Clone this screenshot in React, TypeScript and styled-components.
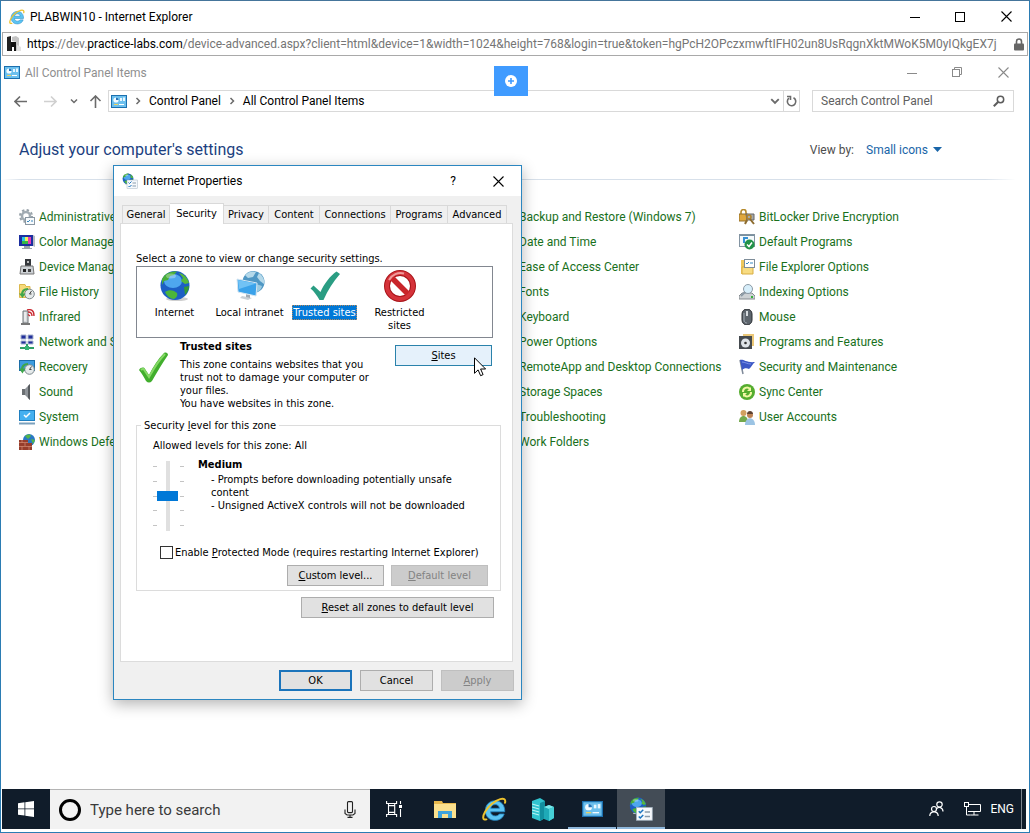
import React from "react";
import styled, { createGlobalStyle, css } from "styled-components";

const UI = `Roboto, "Noto Sans", sans-serif`;
const DLG = `"DejaVu Sans Condensed", "DejaVu Sans", sans-serif`;

const Global = createGlobalStyle`
  *, *::before, *::after { box-sizing: border-box; }
  body { margin: 0; background: #fff; font-family: ${UI}; font-size: 12px; line-height: 16px; color: #000; }
  button, input, select { font: inherit; color: inherit; margin: 0; padding: 0; border: 0; background: none; border-radius: 0; }
  svg { display: block; flex: none; }
  p, h1, h2, ul { margin: 0; padding: 0; }
`;

/* ---------- browser frame ---------- */

const BrowserWindow = styled.div`
  display: flex;
  flex-direction: column;
  min-height: 100vh;
  border: 1px solid #2b7cb3;
  border-top-color: #45759b;
  background: #fff;
`;

const TitleBar = styled.header`
  display: flex;
  align-items: center;
  height: 31px;
  padding-left: 8px;
  > svg { margin-right: 5px; }
`;

const TitleText = styled.h1`
  flex: 1;
  font-size: 12px;
  font-weight: 400;
  white-space: nowrap;
`;

const WindowButton = styled.button<{ $w?: number }>`
  display: flex;
  align-items: center;
  justify-content: center;
  width: ${(p) => p.$w ?? 46}px;
  height: 28px;
`;

const AddressBar = styled.div`
  display: flex;
  align-items: center;
  height: 24px;
  margin: 0 1px;
  padding: 0 3px 0 4px;
  gap: 5px;
  border: 1px solid #a9a9a9;
  font-size: 12px;
`;

const Url = styled.div`
  flex: 1;
  min-width: 0;
  overflow: hidden;
  white-space: nowrap;
  color: #757575;
  b { font-weight: 400; color: #000; }
`;

/* ---------- remote desktop ---------- */

const Desktop = styled.main`
  position: relative;
  flex: 1;
  display: flex;
  flex-direction: column;
  margin: 0 3px 3px 1px;
`;

const PanelTitle = styled.div`
  display: flex;
  align-items: center;
  height: 33px;
  padding-left: 2px;
  color: #8f8f8f;
  > svg { margin-right: 5px; }
  span { flex: 1; }
`;

const NavRow = styled.div`
  display: flex;
  align-items: center;
  margin-top: 1px;
  padding: 0 12px 0 12px;
`;

const NavButtons = styled.div`
  display: grid;
  grid-template-columns: 30px 26px 19px 19px;
  align-items: center;
`;

const NavButton = styled.button`
  display: flex;
  height: 22px;
  align-items: center;
`;

const PathBox = styled.nav`
  display: flex;
  align-items: center;
  flex: 1;
  height: 22px;
  border: 1px solid #d9d9d9;
  padding-left: 2px;
`;

const PathSpace = styled.div`
  flex: 1;
`;

const Crumb = styled.a`
  color: #000;
  text-decoration: none;
  white-space: nowrap;
`;

const CrumbArrow = styled.span`
  display: flex;
  justify-content: center;
  width: 22px;
`;

const PathButton = styled.button<{ $line?: boolean }>`
  display: flex;
  align-items: center;
  justify-content: center;
  width: 16px;
  height: 20px;
  ${(p) => p.$line && css`border-left: 1px solid #d9d9d9;`}
`;

const SearchBox = styled.label`
  display: flex;
  align-items: center;
  width: 202px;
  height: 22px;
  margin-left: 12px;
  padding: 0 8px;
  border: 1px solid #d9d9d9;
  input { flex: 1; min-width: 0; outline: 0; }
  input::placeholder { color: #606060; opacity: 1; }
`;

const Heading = styled.div`
  display: flex;
  align-items: center;
  justify-content: space-between;
  height: 67px;
  padding: 8px 84px 0 17px;
  h2 { font-size: 16px; line-height: 20px; font-weight: 400; color: #1c3f80; }
`;

const ViewBy = styled.div`
  display: flex;
  align-items: center;
  gap: 12px;
  color: #4d4d4d;
`;

const ViewSelect = styled.span`
  display: flex;
  align-items: center;
  gap: 5px;
  select { appearance: none; color: #1965a8; outline: 0; }
`;

const Divider = styled.div`
  height: 1px;
  background: linear-gradient(90deg, #fff, #d7e0ea 20px, #d7e0ea 96%, #fff 99%);
`;

const Items = styled.div`
  display: grid;
  grid-template-columns: repeat(4, 240px);
  padding: 24px 0 0 17px;
  flex: 1;
  align-items: start;
  overflow: hidden;
`;

const ItemColumn = styled.ul<{ $col: number }>`
  grid-column: ${(p) => p.$col};
  grid-row: 1;
  list-style: none;
`;

const Item = styled.li<{ $bare?: boolean }>`
  height: 25px;
  padding-left: ${(p) => (p.$bare ? 20 : 0)}px;
`;

const ItemLink = styled.a`
  display: flex;
  align-items: center;
  height: 25px;
  gap: 4px;
  color: #19701c;
  text-decoration: none;
  white-space: nowrap;
`;

const ConnectBadge = styled.button`
  position: absolute;
  left: 492px;
  top: 10px;
  display: flex;
  align-items: center;
  justify-content: center;
  width: 34px;
  height: 30px;
  background: #409bff;
`;

/* ---------- dialog ---------- */

const Dialog = styled.section`
  position: absolute;
  left: 111px;
  top: 109px;
  width: 409px;
  border: 1px solid #2b86c0;
  background: #f0f0f0;
  box-shadow: 0 4px 14px rgba(0, 0, 0, 0.3);
  font-family: ${DLG};
  font-size: 11px;
  line-height: 13px;
`;

const DialogTitle = styled.header`
  display: flex;
  align-items: center;
  height: 30px;
  padding-left: 8px;
  background: #fff;
  font-family: ${UI};
  font-size: 12px;
  > svg { margin-right: 5px; }
  span { flex: 1; }
`;

const Tabs = styled.div`
  display: flex;
  align-items: flex-end;
  height: 27px;
  padding-left: 8px;
`;

const Tab = styled.button<{ $w: number; $active?: boolean }>`
  width: ${(p) => p.$w}px;
  height: 18px;
  border: 1px solid #d9d9d9;
  border-width: 1px 1px 0 0;
  text-align: center;
  white-space: nowrap;
  &:first-child { border-left-width: 1px; }
  ${(p) =>
    p.$active &&
    css`
      height: 21px;
      padding-bottom: 2px;
      margin-bottom: -1px;
      background: #fff;
      z-index: 1;
    `}
`;

const Page = styled.div`
  height: 439px;
  margin: 0 8px 0 6px;
  padding: 28px 11px 0 15px;
  border: 1px solid #dcdcdc;
  background: #fff;
`;

const ZoneList = styled.div`
  display: flex;
  width: 357px;
  height: 72px;
  margin-top: 1px;
  padding-top: 3px;
  border: 1px solid #828790;
`;

const Zone = styled.button`
  display: flex;
  flex-direction: column;
  align-items: center;
  width: 75px;
  gap: 3px;
  line-height: 13px;
  white-space: nowrap;
`;

const ZoneLabel = styled.span<{ $on?: boolean }>`
  padding: 1px;
  ${(p) =>
    p.$on &&
    css`
      background: #0078d7;
      color: #fff;
      outline: 1px dotted #b98a5a;
      outline-offset: -1px;
    `}
`;

const ZoneInfo = styled.div`
  display: flex;
  height: 81px;
  padding-top: 2px;
`;

const ZoneMark = styled.div`
  width: 44px;
  padding: 12px 0 0 2px;
`;

const ZoneText = styled.div`
  width: 215px;
  white-space: nowrap;
  strong { display: block; margin-bottom: 5px; }
`;

const Button = styled.button<{ $w: number; $kind?: "hot" | "default" }>`
  width: ${(p) => p.$w}px;
  height: 21px;
  border: 1px solid #adadad;
  background: #e1e1e1;
  text-align: center;
  white-space: nowrap;
  &:disabled { background: #cccccc; border-color: #bfbfbf; color: #838383; }
  ${(p) => p.$kind === "hot" && css`background: #e5f1fb; border-color: #2a82ab;`}
  ${(p) => p.$kind === "default" && css`border: 2px solid #1b74bb;`}
`;

const Group = styled.fieldset`
  width: 365px;
  height: 172px;
  margin: 0;
  padding: 7px 12px 5px 16px;
  border: 1px solid #dcdcdc;
  legend { padding: 0 3px; margin-left: -12px; line-height: 13px; }
`;

const LevelRow = styled.div`
  display: flex;
  height: 94px;
  padding-top: 6px;
`;

const Ticks = styled.div`
  display: flex;
  flex-direction: column;
  justify-content: space-between;
  height: 60px;
  margin-top: 8px;
  i { display: block; width: 4px; height: 1px; background: #c4c4c4; }
`;

const LevelSlider = styled.input`
  appearance: none;
  writing-mode: vertical-lr;
  direction: rtl;
  width: 21px;
  height: 70px;
  margin: 3px 2px 0 0;
  outline: 0;
  background: linear-gradient(#e0e0e0, #e0e0e0) center / 4px 100% no-repeat;
  &::-webkit-slider-thumb {
    appearance: none;
    width: 21px;
    height: 10px;
    background: #0078d7;
  }
`;

const LevelText = styled.div`
  margin-left: 14px;
  strong { display: block; margin-bottom: 2px; }
  p { padding-left: 13px; white-space: nowrap; }
`;

const CheckRow = styled.label`
  display: flex;
  align-items: center;
  gap: 2px;
  margin: 0 0 6px 7px;
  white-space: nowrap;
  input { appearance: none; width: 13px; height: 13px; border: 1px solid #333; background: #fff; }
`;

const ButtonRow = styled.div<{ $gap: number; $pad: string }>`
  display: flex;
  justify-content: flex-end;
  gap: ${(p) => p.$gap}px;
  padding: ${(p) => p.$pad};
`;

const Pointer = styled.div`
  position: absolute;
  left: 472px;
  top: 301px;
`;

/* ---------- taskbar ---------- */

const Taskbar = styled.footer`
  display: flex;
  height: 40px;
  background: #101c2a;
  color: #fff;
`;

const TaskButton = styled.button<{ $w?: number; $line?: boolean; $active?: boolean }>`
  display: flex;
  align-items: center;
  justify-content: center;
  width: ${(p) => p.$w ?? 48}px;
  height: 40px;
  ${(p) => p.$active && css`background: #434c56;`}
  ${(p) => (p.$line || p.$active) && css`box-shadow: inset 0 -2px #8fb8dc;`}
`;

const TaskItems = styled.div`
  display: flex;
  flex: 1;
  gap: 1px;
`;

const TaskSearch = styled.label`
  display: flex;
  align-items: center;
  width: 320px;
  padding: 0 14px 0 8px;
  gap: 8px;
  border-top: 1px solid #b4b4b4;
  background: #f2f2f2;
  input { flex: 1; min-width: 0; outline: 0; font-size: 15px; line-height: 20px; }
  input::placeholder { color: #3a3a3a; opacity: 1; }
`;

const Tray = styled.div`
  display: flex;
  align-items: center;
  gap: 20px;
`;

const Lang = styled.button`
  margin-left: -11px;
`;

const ShowDesktop = styled.button`
  width: 5px;
  height: 40px;
  margin-left: -13px;
  border-left: 1px solid #7d858e;
`;

/* ---------- icons ---------- */

type IconProps = { size?: number };

const IeIcon = ({ size = 16 }: IconProps) => (
  <svg width={size} height={size} viewBox="0 0 24 24" fill="none">
    <path d="M21.800 14.200H8.200c.2 2.500 2 4 4.600 4 1.900 0 3.100-.7 3.900-1.900h4.600c-1.200 3.800-4.500 6.100-8.600 6.100C7.200 22.400 3.200 18.800 3.200 13.200s4-9.600 9.400-9.600c5.700 0 9.500 4.200 9.200 10.600zM8.400 10.900h8.300c-.2-2.200-1.700-3.600-4-3.600-2.400 0-3.900 1.300-4.300 3.600z" fill="#5cc4f2" stroke="#2488c5" strokeWidth=".8" />
    <path d="M4.200 21.500C.4 22.600.4 18.800 3 14.200 6.300 8.200 12.500 3.400 17.500 2c3.700-1 5.500.4 4.600 3.600" stroke="#edc22e" strokeWidth="1.900" strokeLinecap="round" />
  </svg>
);

const SiteIcon = () => (
  <svg width="15" height="16" viewBox="0 0 15 16">
    <path d="M0 1l4-1v15H0z" fill="#222" /><path d="M4 6h5v9H7v-4H5v4H4z" fill="#111" />
    <path d="M5 1l4-1 3 2v12l-3 1V6L5 5z" fill="#c4c4c4" /><path d="M10 9l4 2v4h-4z" fill="#e2e2e2" />
  </svg>
);

const LockIcon = () => (
  <svg width="10" height="13" viewBox="0 0 10 13">
    <path d="M2.500 6V3.500a2.500 2.500 0 015 0V6" fill="none" stroke="#666" strokeWidth="1.600" />
    <rect y="5.500" width="10" height="7" rx="1" fill="#666" />
  </svg>
);

const Minimize = ({ c = "#000" }) => (
  <svg width="10" height="10"><path d="M0 5.500h10" stroke={c} /></svg>
);
const Maximize = () => (
  <svg width="10" height="10"><rect x=".5" y=".5" width="9" height="9" fill="none" stroke="#000" /></svg>
);
const Restore = () => (
  <svg width="11" height="11" fill="none" stroke="#8a8a8a"><rect x=".5" y="2.500" width="7" height="7" /><path d="M2.500 2.500v-2h7v7h-2" /></svg>
);
const Close = ({ c = "#000" }) => (
  <svg width="11" height="11"><path d="M.5 .5l10 10M10.500 .5l-10 10" stroke={c} strokeWidth="1.100" /></svg>
);

const PanelIcon = ({ w = 16, h = 13 }: { w?: number; h?: number }) => (
  <svg width={w} height={h} viewBox="0 0 16 13" preserveAspectRatio="none">
    <rect x=".5" y=".5" width="15" height="12" fill="#6cc0ee" stroke="#1b6fae" />
    <circle cx="5" cy="5" r="2.600" fill="#f4fbff" /><path d="M5 5V2.400A2.600 2.600 0 017.600 5z" fill="#2372b8" />
    <rect x="9" y="3" width="2" height="3" fill="#e9f7ff" /><rect x="12" y="2.500" width="2" height="3.500" fill="#e9f7ff" />
    <path d="M3 9.500h4" stroke="#f3d35c" /><path d="M8 9.500h5" stroke="#fff" />
  </svg>
);

const Arrow = ({ c, r = 0 }: { c: string; r?: number }) => (
  <svg width="13" height="13" viewBox="0 0 13 13" fill="none" stroke={c} strokeWidth="1.600">
    <path d="M13 6.500H1.500M6 1.500l-5 5 5 5" transform={`rotate(${r} 6.500 6.500)`} />
  </svg>
);
const Chevron = ({ r = 0, c = "#6b6b6b", s = 8 }: { r?: number; c?: string; s?: number }) => (
  <svg width={s} height={s} viewBox="0 0 8 8" fill="none" stroke={c} strokeWidth="1.500">
    <path d="M1 2.500l3 3 3-3" transform={`rotate(${r} 4 4)`} />
  </svg>
);
const Refresh = () => (
  <svg width="11" height="12" viewBox="0 0 11 12" fill="none" stroke="#6b6b6b" strokeWidth="1.600">
    <path d="M7.500 2.800A4.200 4.200 0 113 3.200" /><path d="M1 1.500h3.500V5" />
  </svg>
);
const Magnifier = () => (
  <svg width="12" height="12" viewBox="0 0 12 12" fill="none" stroke="#5c5c5c">
    <circle cx="7.500" cy="4.500" r="3.200" strokeWidth="1.500" /><path d="M5 7l-4.200 4.200" strokeWidth="2" />
  </svg>
);

const GlobeArt = () => (
  <>
    <ellipse cx="18" cy="29" rx="11" ry="2" fill="#cfcfcf" />
    <circle cx="16" cy="15.500" r="14.500" fill="#1d5fc4" />
    <ellipse cx="14" cy="11" rx="9" ry="7" fill="#4ea6ee" />
    <path d="M3 9C6 3 12 1 18 1.500L15 5l-4 1-2 4-4 1-2 4z" fill="#48ad39" />
    <path d="M20 3c5 1 9 5 10 10l-4 1-4-3 2-3z" fill="#55b83c" />
    <path d="M6 22c4-3 9-2 12 1 1 3-1 5-3 6-4 0-7-3-9-7z" fill="#4cb53a" />
    <path d="M25 17l5-1c0 4-2 7-4 9z" fill="#349a35" />
    <ellipse cx="12" cy="6" rx="5" ry="2.500" fill="#fff" opacity=".3" />
  </>
);
const Globe = () => <svg width="32" height="32" viewBox="0 0 32 32"><GlobeArt /></svg>;

const NetSettings = ({ size = 16 }: IconProps) => (
  <svg width={size} height={size} viewBox="0 0 32 32">
    <g transform="scale(.75)"><GlobeArt /></g>
    <rect x="10" y="14" width="21" height="17" fill="#f6f9fc" stroke="#a5b4c2" />
    <path d="M13 19l2 2 4-4M13 26l2 2 4-4" stroke="#1c74c0" strokeWidth="2" fill="none" /><path d="M21 20h7M21 26h7" stroke="#8b9cab" strokeWidth="2" />
  </svg>
);

const Intranet = () => (
  <svg width="32" height="32" viewBox="0 0 32 32">
    <circle cx="19.500" cy="12" r="11" fill="#4f97c4" />
    <path d="M11 5c4-4 9-4 11-3l-3 5-5 1zM25 3c4 3 6 7 5 11l-4-3-3-4z" fill="#b5d9ea" />
    <path d="M22 14l6 2c-1 4-4 6-6 6z" fill="#9acbe2" />
    <path d="M8 26l10 2-4 2-8-2z" fill="#c9d0d6" /><path d="M12 24l4 1v3l-4-1z" fill="#a0aab3" />
    <path d="M3 9l20 4-1 13L4 22z" fill="#3aa2ea" stroke="#d6e6f2" strokeWidth="1" /><path d="M4 10l18 3.500L5 19z" fill="#71c2f5" />
  </svg>
);
const TealCheck = () => (
  <svg width="32" height="32" viewBox="0 0 32 32"><path d="M1.500 18.500l3-3 7 6.500C15 14 21 6 27.500 1.500L31 4C24 12 19 20 14.500 30h-4C8 26 5 21 1.500 18.500z" fill="#2a9d83" /></svg>
);
const GreenCheck = () => (
  <svg width="32" height="32" viewBox="0 0 32 32">
    <path d="M1 18c2-3 5-3 6-1l4 6C15 15 20 7 26 1c2-1 4 0 4 2C24 12 19 20 14 29c-2 2-4 2-6 0-2-4-4-7-7-11z" fill="#41ae2d" />
    <path d="M3 18c2-2 3-1 4 1l4 6C16 16 20 9 27 2" fill="none" stroke="#85d965" strokeWidth="2" />
  </svg>
);
const Restricted = () => (
  <svg width="32" height="32" viewBox="0 0 32 32">
    <circle cx="16" cy="16" r="13" fill="#fff" stroke="#a91419" strokeWidth="6" />
    <path d="M7 7l18 18" stroke="#c9252a" strokeWidth="5.500" />
    <circle cx="16" cy="16" r="13" fill="none" stroke="#d5333a" strokeWidth="4" />
    <path d="M5 10A13 13 0 0120 3.500" fill="none" stroke="#f09a9a" strokeWidth="2" />
  </svg>
);

const Small = ({ children }: { children: React.ReactNode }) => (
  <svg width="16" height="16" viewBox="0 0 16 16" fill="none">{children}</svg>
);

const icons: Record<string, React.ReactNode> = {
  admin: <Small><circle cx="7" cy="7" r="4" stroke="#a2acb3" strokeWidth="2.500" /><circle cx="7" cy="7" r="6" stroke="#98a2a9" strokeWidth="2" strokeDasharray="2.400 2.300" /><rect x="6.500" y="8.500" width="9" height="7" fill="#f7fafc" stroke="#8b98a3" /><path d="M8 12l1 1 2-2M12 12h2" stroke="#3a87bd" /></Small>,
  color: <Small><path d="M0 1h14l1 11H0z" fill="#1c2fa0" /><path d="M3 3h3v7H3z" fill="#28c6e8" /><path d="M6 3h3v7H6z" fill="#f5f15a" /><path d="M9 3h3v7H9z" fill="#e33db7" /><path d="M3 7h6v3H3z" fill="#35b845" /><path d="M14 1l2 1v11l-2-1z" fill="#b6bbc3" /><path d="M5 12h6v2h2v1H3v-1h2z" fill="#9ba1aa" /></Small>,
  device: <Small><rect x="6" y="0" width="6" height="7" fill="#34373b" /><rect x="8" y="2" width="2" height="2" fill="#bbb" /><path d="M2 7h12l1 8H1z" fill="#cdd1d5" stroke="#777" /><rect x="4" y="10" width="3" height="3" fill="#222" /><rect x="9" y="10" width="3" height="3" fill="#444" /></Small>,
  history: <Small><path d="M.5 .5H6l1 2h4v11H.5z" fill="#f6da7a" stroke="#dcb84c" /><circle cx="10.500" cy="10" r="4.800" fill="#e4e9ea" stroke="#7d898e" /><path d="M10.500 10l2-3M10.500 10h2" stroke="#444" /><path d="M9 5C5 5 3 7.500 3 11" stroke="#3fa64a" strokeWidth="2.200" /><path d="M0 9.500h6.500L3.500 14z" fill="#3fa64a" /></Small>,
  infrared: <Small><path d="M4 2h5v12H4z" fill="#d5d8da" stroke="#6e7478" /><path d="M6 3v9" stroke="#fff" /><path d="M2 15h9" stroke="#777" strokeWidth="2" /><path d="M8 1c4-1 7 0 7 6M9 3c3 0 4 1 4 4M9 5.500l2 1.500" stroke="#c92b33" strokeWidth="1.400" /></Small>,
  network: <Small><path d="M2 1h5v4H2zM9 1h5v4H9zM2 7h5v3H2zM9 7h5v3H9z" fill="#22309b" stroke="#a9b4cf" /><path d="M8 10v4M1 14h14" stroke="#2f9f65" strokeWidth="2" /><rect x="6" y="12" width="4" height="4" fill="#38b377" /></Small>,
  recovery: <Small><rect x=".5" y="1.500" width="15" height="10" fill="#3c9cdf" stroke="#1b6ca8" /><circle cx="10.500" cy="10.500" r="4.800" fill="#e4e9ea" stroke="#7d898e" /><path d="M10.500 10.500l2-3M10.500 10.500h2" stroke="#444" /><path d="M9 5C5 5 3 7.500 3 11" stroke="#3fa64a" strokeWidth="2.200" /><path d="M0 9.500h6.500L3.500 14.500z" fill="#3fa64a" /></Small>,
  sound: <Small><path d="M3 5h3v6H3z" fill="#6b6f73" /><path d="M6 5l5-5v16l-5-5z" fill="#8f9499" /><path d="M9 2l2-2v16l-2-2z" fill="#565a5e" /></Small>,
  system: <Small><rect x=".5" y="1.500" width="15" height="10" fill="#45b0f0" stroke="#1f7fc0" /><path d="M5 6l2 2 4-4" stroke="#fff" strokeWidth="1.500" /><path d="M0 14.500h16" stroke="#7aa0bd" strokeWidth="2" /></Small>,
  firewall: <Small><circle cx="10" cy="6" r="6" fill="#2978c4" /><path d="M6 2c3-2 5-2 6 0l-3 3zM12 5l4 1-2 4z" fill="#53b648" /><path d="M0 6h9v3h4v7H0z" fill="#963d2c" /><path d="M0 8.500h9M0 12.500h13M3 6v3M6 9v3M3 12v4M10 12v4" stroke="#d58d76" strokeWidth=".7" /></Small>,
  bitlocker: <Small><path d="M2 5V3a2.500 2.500 0 015 0v3" stroke="#b58a2c" strokeWidth="1.600" /><rect x="0" y="5" width="8" height="7" fill="#dfa73d" stroke="#94702a" /><path d="M7 5h8v6H8z" fill="#a5a9ac" stroke="#666" /><circle cx="10" cy="8" r="2" stroke="#b0822a" strokeWidth="1.500" /><path d="M11 10l4 5M8 11l-2 4" stroke="#8d6c2f" strokeWidth="2" /></Small>,
  defaults: <Small><rect x=".5" y=".5" width="15" height="12" fill="#f6fafc" stroke="#8394a2" /><path d="M1 1.500h14" stroke="#78909f" /><path d="M5 9V4h4" stroke="#3691d5" strokeWidth="2" /><circle cx="10.500" cy="10.500" r="5" fill="#229248" /><path d="M8 10.500l2 2 3-4" stroke="#fff" strokeWidth="1.500" /></Small>,
  explorer: <Small><path d="M2 1h5v14H2z" fill="#eec85e" /><path d="M3 8h11v7H3z" fill="#f8dc82" stroke="#d8ae45" /><rect x="5.500" y=".5" width="10" height="8" fill="#fff" stroke="#7e8d99" /><path d="M7 4l1 1 2-2M11 4h3" stroke="#3989c1" /></Small>,
  indexing: <Small><path d="M3 9h10l3 3v3H0v-3z" fill="#cdd1d4" stroke="#858b90" /><circle cx="9" cy="5" r="4.500" fill="#d7eefa" stroke="#8c9aa5" /><path d="M6 8l-4 4" stroke="#8c9aa5" strokeWidth="2" /><path d="M12 13h2" stroke="#37b13b" strokeWidth="2" /></Small>,
  mouse: <Small><rect x="3" y="0" width="10" height="16" rx="5" fill="#5d656d" stroke="#2a2e33" /><path d="M5 4v7c0 3 3 3 3 3" stroke="#a4acb4" /><rect x="7" y="2" width="2" height="5" fill="#d5dade" /></Small>,
  programs: <Small><path d="M4 0h11v12H4z" fill="#ecc878" /><rect x="0" y="2" width="13" height="13" fill="#454a4f" /><circle cx="6.500" cy="9" r="4.500" fill="#dfe4e8" /><circle cx="6.500" cy="9" r="1.300" fill="#333" /></Small>,
  flag: <Small><path d="M1 1l3 14" stroke="#7f8a9a" strokeWidth="1.500" /><path d="M1 1c4-1 6 3 15 2-3 2-3 5-6 7-2-1-5-1-7 1z" fill="#3c57c5" /><path d="M3 3c3 0 5 2 9 2" stroke="#7c93e8" /></Small>,
  sync: <Small><circle cx="8" cy="8" r="8" fill="#55ad2f" /><path d="M4 8a4 4 0 017-3M12 8a4 4 0 01-7 3" stroke="#f1f8a5" strokeWidth="2" /><path d="M12 3v4H8zM4 13V9h4z" fill="#f1f8a5" /></Small>,
  users: <Small><circle cx="4.500" cy="4" r="3" fill="#d2a05f" /><path d="M0 13c0-8 9-8 9 0z" fill="#74a94c" /><circle cx="11" cy="6" r="3" fill="#bd8355" /><path d="M8 5c0-4 6-4 6 0z" fill="#5d4132" /><path d="M6 16c0-9 10-9 10 0z" fill="#9cc4e4" /></Small>,
};

const StartLogo = () => (
  <svg width="16" height="16" viewBox="0 0 16 16" fill="#fff"><path d="M0 2.200l6.500-.9v6.200H0zM7.300 1.200L16 0v7.500H7.300zM0 8.300h6.500v6.300L0 13.700zM7.300 8.300H16V16l-8.700-1.200z" /></svg>
);
const Mic = () => (
  <svg width="12" height="17" viewBox="0 0 12 17" fill="none" stroke="#222" strokeWidth="1.100"><rect x="3.500" y=".6" width="5" height="11" rx="1" /><path d="M1 8.500v4l2 1.500h6l2-1.500v-4M6 14v2.500M3.500 16.400h5" /></svg>
);
const TaskView = () => (
  <svg width="17" height="16" viewBox="0 0 17 16" fill="none" stroke="#fff" strokeWidth="1.100"><path d="M.6 0v2.500h10V0M.6 16v-2.500h10V16M2.500 2.500v11M8.700 2.500v11M2.500 4.600h6.200M2.500 11.400h6.200M14.500 0v3M14.500 8v8" /><rect x="13" y="4" width="3" height="3" fill="#fff" stroke="none" /></svg>
);
const Folder = () => (
  <svg width="22" height="19" viewBox="0 0 22 19"><path d="M0 1h8l1 2h13v15H0z" fill="#e8b84c" /><path d="M0 4h22v14H0z" fill="#fbe08d" /><path d="M4 18v-7h14v7h-4v-4H8v4z" fill="#3fa3dc" /></svg>
);
const Servers = () => (
  <svg width="22" height="23" viewBox="0 0 22 23"><path d="M0 3l8-3 5 3v17l-5 3-8-3z" fill="#31c4cf" /><path d="M8 5l5-2v17l-5 3z" fill="#128f9f" /><path d="M0 6l7 2M0 9l7 2M0 12l7 2M0 15l7 2" stroke="#b9f4f5" strokeWidth="1.200" /><path d="M12 9l5-2 5 2v11l-5 3-5-2z" fill="#1faab7" /><path d="M12 9l5-2 5 2-5 2z" fill="#7ce8ea" /><path d="M17 11l5-2v11l-5 3z" fill="#46cfd6" /></svg>
);
const People = () => (
  <svg width="15" height="16" viewBox="0 0 15 16" fill="none" stroke="#fff" strokeWidth="1.200"><circle cx="10.500" cy="3.500" r="2.700" /><path d="M7.500 8c2-3 6.500-1.500 6.500 2.500" /><circle cx="5" cy="8" r="2.500" /><path d="M.8 15c0-5.500 8.400-5.500 8.400 0" /></svg>
);
const Ethernet = () => (
  <svg width="17" height="14" viewBox="0 0 17 14" fill="none" stroke="#fff"><path d="M5 2.500h11.500v7H4M10 9.500V13M6.500 13h8M2.500 5v8h4" /><rect x=".5" y=".5" width="4" height="4" /></svg>
);

/* ---------- content ---------- */

const columnOne = [
  ["admin", "Administrative Tools"], ["color", "Color Management"], ["device", "Device Manager"],
  ["history", "File History"], ["infrared", "Infrared"], ["network", "Network and Sharing Center"],
  ["recovery", "Recovery"], ["sound", "Sound"], ["system", "System"], ["firewall", "Windows Defender Firewall"],
];
const columnThree = [
  "Backup and Restore (Windows 7)", "Date and Time", "Ease of Access Center", "Fonts", "Keyboard",
  "Power Options", "RemoteApp and Desktop Connections", "Storage Spaces", "Troubleshooting", "Work Folders",
];
const columnFour = [
  ["bitlocker", "BitLocker Drive Encryption"], ["defaults", "Default Programs"], ["explorer", "File Explorer Options"],
  ["indexing", "Indexing Options"], ["mouse", "Mouse"], ["programs", "Programs and Features"],
  ["flag", "Security and Maintenance"], ["sync", "Sync Center"], ["users", "User Accounts"],
];
const tabs: [string, number][] = [
  ["General", 48], ["Security", 54], ["Privacy", 45], ["Content", 51], ["Connections", 71], ["Programs", 57], ["Advanced", 59],
];

const IconColumn = ({ col, items }: { col: number; items: string[][] }) => (
  <ItemColumn $col={col}>
    {items.map(([icon, name]) => (
      <Item key={name}><ItemLink href="#">{icons[icon]}{name}</ItemLink></Item>
    ))}
  </ItemColumn>
);

const InternetProperties = () => (
  <Dialog role="dialog" aria-label="Internet Properties">
    <DialogTitle>
      <NetSettings />
      <span>Internet Properties</span>
      <WindowButton $w={44} aria-label="Help">?</WindowButton>
      <WindowButton $w={46} aria-label="Close"><Close /></WindowButton>
    </DialogTitle>
    <Tabs role="tablist">
      {tabs.map(([name, w]) => (
        <Tab key={name} role="tab" $w={w} $active={name === "Security"}>{name}</Tab>
      ))}
    </Tabs>
    <Page>
      <p>Select a zone to view or change security settings.</p>
      <ZoneList>
        <Zone><Globe /><ZoneLabel>Internet</ZoneLabel></Zone>
        <Zone><Intranet /><ZoneLabel>Local intranet</ZoneLabel></Zone>
        <Zone><TealCheck /><ZoneLabel $on>Trusted sites</ZoneLabel></Zone>
        <Zone><Restricted /><ZoneLabel>Restricted<br />sites</ZoneLabel></Zone>
      </ZoneList>
      <ZoneInfo>
        <ZoneMark><GreenCheck /></ZoneMark>
        <ZoneText>
          <strong>Trusted sites</strong>
          <p>This zone contains websites that you<br />trust not to damage your computer or<br />your files.<br />You have websites in this zone.</p>
        </ZoneText>
        <ButtonRow $gap={0} $pad="5px 0 0"><Button $w={97} $kind="hot"><u>S</u>ites</Button></ButtonRow>
      </ZoneInfo>
      <Group>
        <legend>Security <u>l</u>evel for this zone</legend>
        <p>Allowed levels for this zone: All</p>
        <LevelRow>
          <Ticks><i /><i /><i /><i /><i /></Ticks>
          <LevelSlider type="range" min={0} max={4} defaultValue={2} aria-label="Security level for this zone" />
          <Ticks><i /><i /><i /><i /><i /></Ticks>
          <LevelText>
            <strong>Medium</strong>
            <p>- Prompts before downloading potentially unsafe<br />content<br />- Unsigned ActiveX controls will not be downloaded</p>
          </LevelText>
        </LevelRow>
        <CheckRow><input type="checkbox" /><span>Enable <u>P</u>rotected Mode (requires restarting Internet Explorer)</span></CheckRow>
        <ButtonRow $gap={7} $pad="0">
          <Button $w={97}><u>C</u>ustom level...</Button>
          <Button $w={97} disabled><u>D</u>efault level</Button>
        </ButtonRow>
      </Group>
      <ButtonRow $gap={0} $pad="6px 7px 0 0"><Button $w={193}><u>R</u>eset all zones to default level</Button></ButtonRow>
    </Page>
    <ButtonRow $gap={8} $pad="8px 7px">
      <Button $w={73} $kind="default">OK</Button>
      <Button $w={73}>Cancel</Button>
      <Button $w={73} disabled><u>A</u>pply</Button>
    </ButtonRow>
  </Dialog>
);

export default function App() {
  return (
    <>
      <Global />
      <BrowserWindow>
        <TitleBar>
          <IeIcon />
          <TitleText>PLABWIN10 - Internet Explorer</TitleText>
          <WindowButton $w={44} aria-label="Minimize"><Minimize /></WindowButton>
          <WindowButton aria-label="Maximize"><Maximize /></WindowButton>
          <WindowButton aria-label="Close"><Close /></WindowButton>
        </TitleBar>
        <AddressBar>
          <SiteIcon />
          <Url><b>https</b>://dev.<b>practice-labs.com</b>/device-advanced.aspx?client=html&amp;device=1&amp;width=1024&amp;height=768&amp;login=true&amp;token=hgPcH2OPczxmwftIFH02un8UsRqgnXktMWoK5M0yIQkgEX7j</Url>
          <LockIcon />
        </AddressBar>
        <Desktop>
          <PanelTitle>
            <PanelIcon />
            <span>All Control Panel Items</span>
            <WindowButton $w={44} aria-label="Minimize panel"><Minimize c="#8a8a8a" /></WindowButton>
            <WindowButton aria-label="Restore panel"><Restore /></WindowButton>
            <WindowButton aria-label="Close panel"><Close c="#8a8a8a" /></WindowButton>
          </PanelTitle>
          <NavRow>
            <NavButtons>
              <NavButton aria-label="Back"><Arrow c="#6b6b6b" /></NavButton>
              <NavButton aria-label="Forward"><Arrow c="#d0d0d0" r={180} /></NavButton>
              <NavButton aria-label="Recent"><Chevron /></NavButton>
              <NavButton aria-label="Up"><Arrow c="#6b6b6b" r={90} /></NavButton>
            </NavButtons>
            <PathBox aria-label="Path">
              <PanelIcon />
              <CrumbArrow><Chevron r={-90} /></CrumbArrow>
              <Crumb href="#">Control Panel</Crumb>
              <CrumbArrow><Chevron r={-90} /></CrumbArrow>
              <Crumb href="#">All Control Panel Items</Crumb>
              <PathSpace />
              <PathButton aria-label="Previous locations"><Chevron s={10} /></PathButton>
              <PathButton $line aria-label="Refresh"><Refresh /></PathButton>
            </PathBox>
            <SearchBox><input type="text" placeholder="Search Control Panel" aria-label="Search Control Panel" /><Magnifier /></SearchBox>
          </NavRow>
          <Heading>
            <h2>Adjust your computer's settings</h2>
            <ViewBy>
              <label htmlFor="view">View by:</label>
              <ViewSelect>
                <select id="view"><option>Small icons</option></select>
                <svg width="9" height="5"><path d="M0 0h9L4.500 5z" fill="#1965a8" /></svg>
              </ViewSelect>
            </ViewBy>
          </Heading>
          <Divider />
          <Items>
            <IconColumn col={1} items={columnOne} />
            <ItemColumn $col={3}>
              {columnThree.map((name) => <Item key={name} $bare><ItemLink href="#">{name}</ItemLink></Item>)}
            </ItemColumn>
            <IconColumn col={4} items={columnFour} />
          </Items>
          <ConnectBadge aria-label="Open toolbar">
            <svg width="12" height="12"><circle cx="6" cy="6" r="6" fill="#fff" /><path d="M6 3v6M3 6h6" stroke="#409bff" strokeWidth="1.600" /></svg>
          </ConnectBadge>
          <InternetProperties />
          <Pointer>
            <svg width="13" height="20" viewBox="0 0 13 20"><path d="M.5 .8v15.500l3.600-3.400 2.500 5.800 2.500-1.100-2.500-5.600h5z" fill="#fff" stroke="#000" /></svg>
          </Pointer>
          <Taskbar>
            <TaskButton aria-label="Start"><StartLogo /></TaskButton>
            <TaskSearch>
              <svg width="24" height="24"><circle cx="12" cy="12" r="9.500" fill="none" stroke="#000" strokeWidth="3" /></svg>
              <input type="text" placeholder="Type here to search" aria-label="Type here to search" />
              <Mic />
            </TaskSearch>
            <TaskItems>
              <TaskButton $w={49} aria-label="Task view"><TaskView /></TaskButton>
              <TaskButton $w={49} aria-label="File Explorer"><Folder /></TaskButton>
              <TaskButton aria-label="Internet Explorer"><IeIcon size={25} /></TaskButton>
              <TaskButton aria-label="Server Manager"><Servers /></TaskButton>
              <TaskButton $line aria-label="Control Panel"><PanelIcon w={21} h={16} /></TaskButton>
              <TaskButton $active aria-label="Internet Properties"><NetSettings size={24} /></TaskButton>
            </TaskItems>
            <Tray>
              <People />
              <Ethernet />
              <Lang>ENG</Lang>
              <ShowDesktop aria-label="Show desktop" />
            </Tray>
          </Taskbar>
        </Desktop>
      </BrowserWindow>
    </>
  );
}
